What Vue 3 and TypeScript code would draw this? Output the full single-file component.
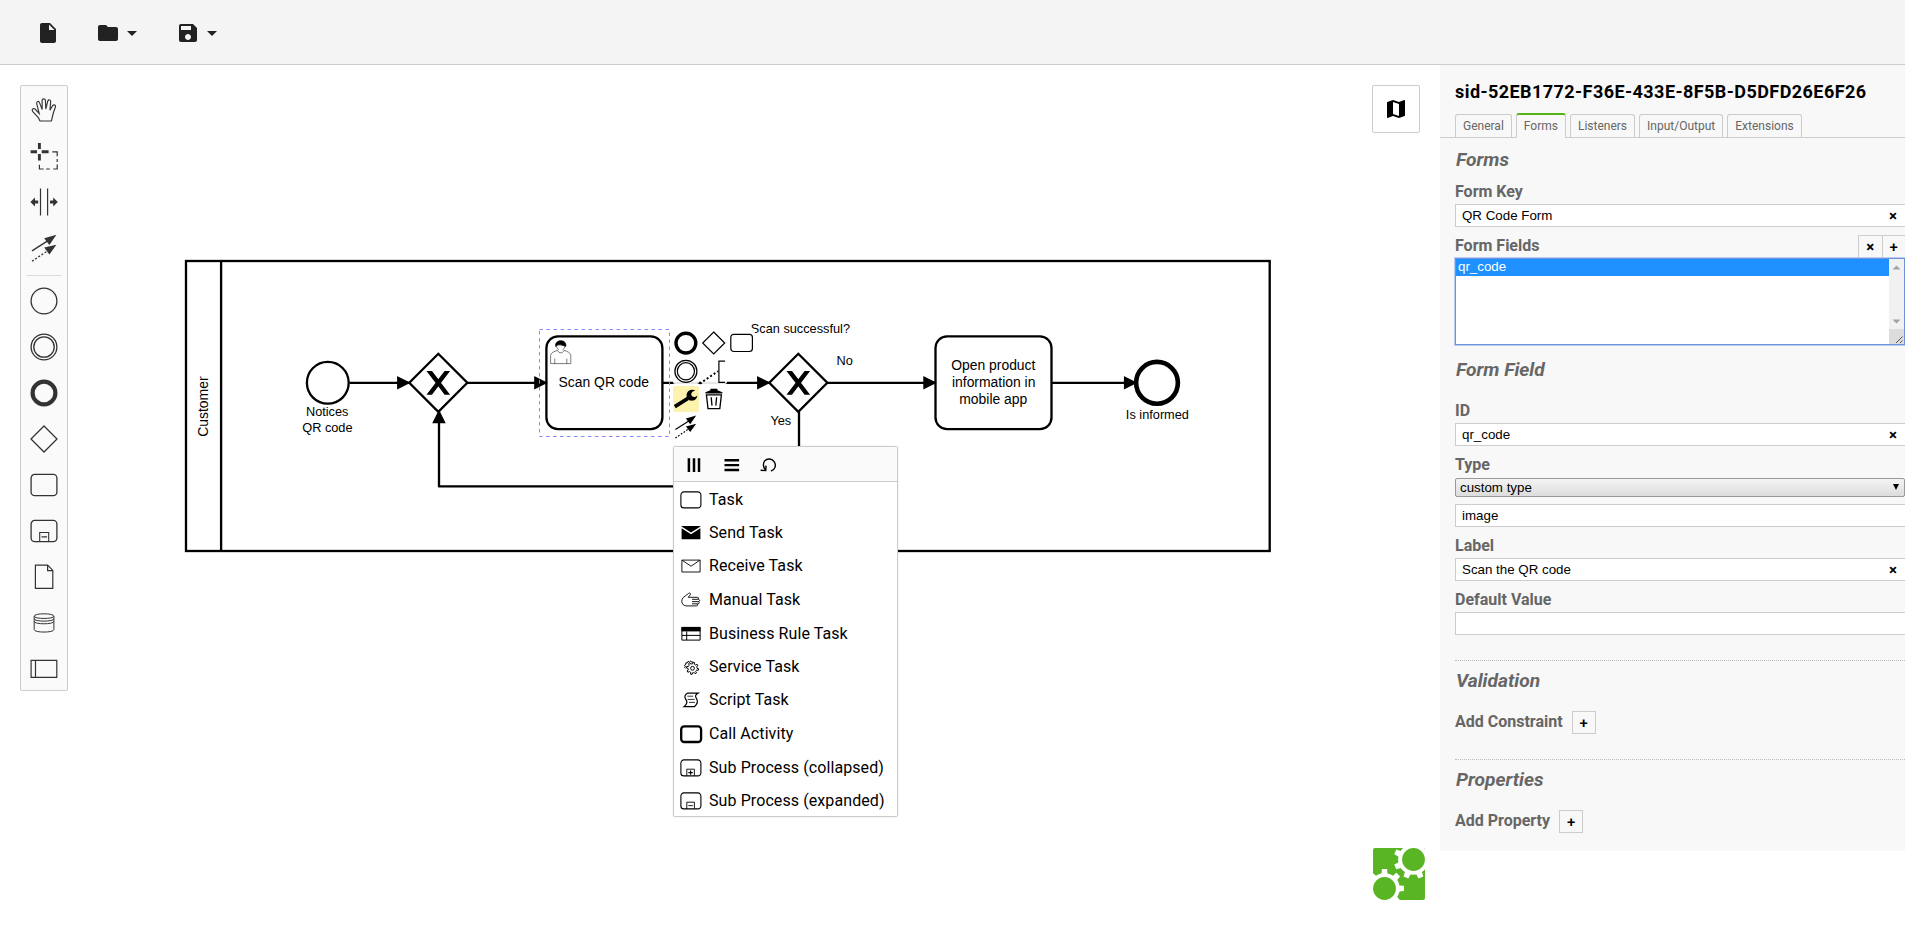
<script setup lang="ts">
interface Shape {
  d: string
  w?: number
  solid?: boolean
  dash?: string
}

interface MenuItem {
  label: string
  icon: string
}

const ring = (cx: number, cy: number, r: number): string =>
  `M${cx - r} ${cy}a${r} ${r} 0 1 0 ${2 * r} 0a${r} ${r} 0 1 0 ${-2 * r} 0z`

const box = (x: number, y: number, w: number, h: number, r: number): string =>
  `M${x + r} ${y}h${w - 2 * r}a${r} ${r} 0 0 1 ${r} ${r}v${h - 2 * r}a${r} ${r} 0 0 1 ${-r} ${r}h${2 * r - w}a${r} ${r} 0 0 1 ${-r} ${-r}v${2 * r - h}a${r} ${r} 0 0 1 ${r} ${-r}z`

const gear = (cx: number, cy: number, inner: number, outer: number, teeth: number, offset: number): string => {
  const points: string[] = []
  const step = (Math.PI * 2) / teeth
  for (let i = 0; i < teeth; i++) {
    const a = offset + i * step
    const spots: [number, number][] = [
      [inner, -0.25 * step],
      [outer, -0.17 * step],
      [outer, 0.17 * step],
      [inner, 0.25 * step],
      [inner, 0.5 * step],
    ]
    for (const [r, da] of spots) {
      points.push(`${(cx + r * Math.cos(a + da)).toFixed(2)} ${(cy + r * Math.sin(a + da)).toFixed(2)}`)
    }
  }
  return `M${points.join('L')}z`
}

/* Palette icons, 30 x 30 */
const paletteIcons: Record<string, Shape[]> = {
  hand: [
    {
      d: 'M11 26L9.3 22.6L3.6 16.4C2.4 14.6 4.2 12.6 6 14L10.2 18.4L7.7 8.6C7.4 6.3 9.8 5.7 10.5 7.6L13.2 14.6L13.1 5.2C13.2 3.4 16.1 3.4 16.4 5.2L16.8 14L18.8 6C19.5 4.2 21.9 4.9 21.7 6.7L20.9 15.2L23.6 10.6C24.9 9.1 27.1 10.2 26.4 12L24.3 18L22.4 26z',
      w: 1.15,
    },
  ],
  lasso: [
    { d: 'M1.6 10.8H8M12.7 10.8H19.6M10.4 2V8.1M10.4 13V19.6', w: 2.9 },
    { d: 'M23.3 10.8H28.2V15.2M28.2 18V21M28.2 23.6V28H24.3M20.8 28H17.2M14.6 28H10.4V23.8', w: 1.2 },
  ],
  space: [
    { d: 'M11.5 1.6V28.6M18.6 1.6V28.6', w: 1.2 },
    { d: 'M1.4 15L6 10.6V13.5H9.2V16.5H6V19.4zM28.8 15L24.2 10.6V13.5H21V16.5H24.2V19.4z', solid: true },
  ],
  connect: [
    { d: 'M3 17.9L19 7.6', w: 1.3 },
    { d: 'M3 28.2L19 17.6', w: 1.3, dash: '2 1.8' },
    { d: 'M27.4 1.8L15.2 5.2L20.4 11.9zM27.4 11.8L15.2 14.6L20.4 21.4z', solid: true },
  ],
  start: [{ d: ring(15, 15, 12.9), w: 1.3 }],
  intermediate: [
    { d: ring(15, 15, 12.9), w: 1.3 },
    { d: ring(15, 15, 10.2), w: 1.3 },
  ],
  end: [{ d: ring(15, 15, 11.4), w: 4.2 }],
  gateway: [{ d: 'M15 2L28 15L15 28L2 15z', w: 1.3 }],
  task: [{ d: box(2.1, 4.4, 25.8, 21.2, 3.6), w: 1.3 }],
  subprocess: [
    { d: box(2.1, 4.4, 25.8, 21.2, 3.6), w: 1.3 },
    { d: 'M10.7 25.3V16.5H19.7V25.3M12.5 20.9H18', w: 1.1 },
  ],
  dataObject: [{ d: 'M6.4 3.2H18.6L23.8 8.4V26.4H6.4zM18.6 3.2V8.6H23.8', w: 1.2 }],
  dataStore: [
    {
      d: 'M5.2 8.2C5.2 5 24.9 5 24.9 8.2V21.6C24.9 24.9 5.2 24.9 5.2 21.6zM5.2 8.2C5.2 11.2 24.9 11.2 24.9 8.2M5.2 10.8C5.2 13.9 24.9 13.9 24.9 10.8M5.2 13.4C5.2 16.6 24.9 16.6 24.9 13.4',
      w: 1,
    },
  ],
  participant: [{ d: 'M2.1 6.3H27.8V23.3H2.1zM6.5 6.3V23.3', w: 1.2 }],
}

/* Morph menu icons, 24 x 24 */
const menuIcons: Record<string, Shape[]> = {
  task: [{ d: box(1.9, 3.9, 20, 16, 3), w: 1.1 }],
  send: [{ d: 'M2.6 5.6L12 11.6L21.4 5.6V4.9H2.6zM2.6 7.3L12 13.3L21.4 7.3V18.2H2.6z', solid: true }],
  receive: [{ d: 'M2.9 6.1H21.1V18H2.9zM2.9 6.1L12 12.2L21.1 6.1', w: 0.9 }],
  manual: [
    {
      d: 'M7 17.9C4.2 17.4 2.7 15.6 2.8 13.1C2.9 10.2 4.4 9.2 6.6 7.8L9.6 5.4C10.9 4.4 12.3 5.8 11.2 6.9L9.2 9.3H18.4C20 9.3 20 11.3 18.4 11.3H13M18.6 11.3C21.5 11.3 21.5 13.6 18.6 13.6H13M18.8 13.6C20.9 13.8 20.7 15.8 18.6 15.8H13M17.8 15.8C19.3 16.1 19 17.9 17.4 17.9H7',
      w: 0.9,
    },
  ],
  rule: [
    { d: 'M2.5 5H21.5V9.4H2.5z', solid: true },
    { d: 'M2.9 5.4H21.1V18.1H2.9zM2.9 13.4H21.1M7.7 9.4V18.1', w: 1 },
  ],
  service: [
    { d: gear(13.5, 13.3, 4.5, 6.1, 8, 0.2), w: 1 },
    { d: ring(13.5, 13.3, 1.9), w: 1 },
    { d: 'M6.6 13.2L5.5 12.4L6.3 11.3L5.5 10.2L6.8 9.3L6.8 7.9L8.4 7.8L9 6.4L10.4 7L11.6 5.9L12.4 7L13.9 6.9', w: 1 },
  ],
  script: [
    {
      d: 'M8.5 5.2H19C16.4 6.7 15.8 8.2 17.4 10.4C19 12.8 18.9 15.6 15.4 18.7H5C8.8 15.7 8.6 13.6 6.7 11.1C5.1 8.8 5.8 6.7 8.5 5.2z',
      w: 1.2,
    },
    { d: 'M8.3 8.2H14.2M8.6 11.4H15.6M10 14.4H16', w: 0.8 },
  ],
  call: [{ d: box(2.2, 4.4, 19.9, 15.6, 3), w: 2.3 }],
  collapsed: [
    { d: box(1.9, 3.9, 20, 16, 3), w: 1.1 },
    { d: 'M7.8 19.8V13.2H15.4V19.8', w: 0.9 },
    { d: 'M9.4 16.6H13.8M11.6 14.4V18.8', w: 1.2 },
  ],
  expanded: [
    { d: box(1.9, 3.9, 20, 16, 3), w: 1.1 },
    { d: 'M7.8 19.8V13.2H15.4V19.8M9.4 16.6H13.8', w: 0.9 },
  ],
}

const toolGroup = ['hand', 'lasso', 'space', 'connect']
const elementGroup = ['start', 'intermediate', 'end', 'gateway', 'task', 'subprocess', 'dataObject', 'dataStore', 'participant']

const menuItems: MenuItem[] = [
  { label: 'Task', icon: 'task' },
  { label: 'Send Task', icon: 'send' },
  { label: 'Receive Task', icon: 'receive' },
  { label: 'Manual Task', icon: 'manual' },
  { label: 'Business Rule Task', icon: 'rule' },
  { label: 'Service Task', icon: 'service' },
  { label: 'Script Task', icon: 'script' },
  { label: 'Call Activity', icon: 'call' },
  { label: 'Sub Process (collapsed)', icon: 'collapsed' },
  { label: 'Sub Process (expanded)', icon: 'expanded' },
]

const tabs = ['General', 'Forms', 'Listeners', 'Input/Output', 'Extensions']
const activeTab = 'Forms'

const gatewayMarker =
  'm-9.14-9.71 7.43 9.71-7.43 9.71 3.43 0 5.71-7.46 5.71 7.46 3.43 0-7.43-9.71 7.43-9.71-3.43 0-5.71 7.46-5.71-7.46z'

const logoGears = [gear(40.4, 11.4, 15.3, 19.8, 8, Math.PI / 8), gear(11.5, 40.4, 15.3, 19.6, 8, 0)]
</script>

<template>
  <div class="app">
    <header class="toolbar">
      <svg class="tool file" viewBox="0 0 24 24"><path d="M6 2c-1.1 0-1.99.9-1.99 2L4 20c0 1.1.89 2 1.99 2H18c1.1 0 2-.9 2-2V8l-6-6H6zm7 7V3.5L18.5 9H13z" /></svg>
      <div class="tool-pair">
        <svg class="tool" viewBox="0 0 24 24"><path d="M10 4H4c-1.1 0-1.99.9-1.99 2L2 18c0 1.1.9 2 2 2h16c1.1 0 2-.9 2-2V8c0-1.1-.9-2-2-2h-8l-2-2z" /></svg>
        <svg class="tool" viewBox="0 0 24 24"><path d="M7 10l5 5 5-5z" /></svg>
      </div>
      <div class="tool-pair">
        <svg class="tool" viewBox="0 0 24 24"><path d="M17 3H5c-1.11 0-2 .9-2 2v14c0 1.1.89 2 2 2h14c1.1 0 2-.9 2-2V7l-4-4zm-5 16c-1.66 0-3-1.34-3-3s1.34-3 3-3 3 1.34 3 3-1.34 3-3 3zm3-10H5V5h10v4z" /></svg>
        <svg class="tool" viewBox="0 0 24 24"><path d="M7 10l5 5 5-5z" /></svg>
      </div>
    </header>

    <div class="workspace">
      <main class="canvas">
        <svg class="diagram" viewBox="0 65 1440 884">
          <defs>
            <marker id="arrow" viewBox="0 0 20 20" refX="11" refY="10" markerWidth="10" markerHeight="10" orient="auto">
              <path d="M1 5L11 10L1 15z" fill="#000" stroke="#000" stroke-width="1" />
            </marker>
          </defs>

          <g class="line">
            <rect x="186" y="261" width="1083.7" height="290" />
            <path d="M221.1 261V551" />
            <circle cx="327.8" cy="382.8" r="20.9" />
            <path d="M438.3 353.8L467.3 382.8L438.3 411.8L409.3 382.8z" />
            <rect x="546.4" y="336.4" width="116" height="92.8" rx="11.6" />
            <path d="M798.3 353.8L827.3 382.8L798.3 411.8L769.3 382.8z" />
            <rect x="935.5" y="336.4" width="116" height="92.8" rx="11.6" />
            <circle class="thick" cx="1157" cy="382.8" r="20.9" />
          </g>

          <g class="line">
            <path class="flow" d="M349.5 382.8H409.3" />
            <path class="flow" d="M467.3 382.8H546.4" />
            <path class="flow" d="M662.4 382.8H769.3" />
            <path class="flow" d="M827.3 382.8H935.5" />
            <path class="flow" d="M1051.5 382.8H1136.1" />
            <path class="flow" d="M799 411.8V486.4H439V411" />
          </g>

          <path class="mark" :d="gatewayMarker" transform="translate(438.3 382.8) scale(1.16)" />
          <path class="mark" :d="gatewayMarker" transform="translate(798.3 382.8) scale(1.16)" />

          <g class="user">
            <path d="M550.6 363.6V355.4C551.2 352.6 554 351.4 557.6 350.4C558.8 353.6 563 353.6 564 350.4C567.6 351.4 570.2 352.6 570.8 355.4V363.6z" />
            <path d="M554.8 363.6V358.6M566.8 363.6V358.6" />
            <path d="M557.6 350.4L558.4 349.4C555.2 346.4 555.6 341.4 560.7 341.2C565.8 341.4 566.2 346.4 563.2 349.4L564 350.4" />
            <path class="hair" d="M555.7 346.4C555.2 342.6 557.6 340.8 560.7 340.8C564 340.8 566.4 342.8 565.8 346.4C564.4 345.6 563.6 345.9 562.2 345.3C560 344.6 557.6 344.6 555.7 346.4z" />
          </g>

          <rect class="selection" x="539.5" y="329.5" width="130" height="107" />

          <g class="task-label">
            <text transform="translate(208.3 406.6) rotate(-90)">Customer</text>
            <text x="603.8" y="387">Scan QR code</text>
            <text x="993.3" y="370">Open product</text>
            <text x="993.7" y="387">information in</text>
            <text x="993.3" y="404">mobile app</text>
          </g>
          <g class="outer-label">
            <text x="327.2" y="416">Notices</text>
            <text x="327.4" y="432">QR code</text>
            <text x="800.4" y="333">Scan successful?</text>
            <text x="844.7" y="365">No</text>
            <text x="780.8" y="425">Yes</text>
            <text x="1157.4" y="419.4">Is informed</text>
          </g>
        </svg>

        <div class="palette">
          <svg v-for="name in toolGroup" :key="name" class="entry" viewBox="-8 -8 46 46">
            <path v-for="(s, i) in paletteIcons[name]" :key="i" :d="s.d" :class="s.solid ? 'solid' : 'outline'" :stroke-width="s.w" :stroke-dasharray="s.dash" />
          </svg>
          <hr class="separator" />
          <svg v-for="name in elementGroup" :key="name" class="entry" viewBox="-8 -8 46 46">
            <path v-for="(s, i) in paletteIcons[name]" :key="i" :d="s.d" :class="s.solid ? 'solid' : 'outline'" :stroke-width="s.w" :stroke-dasharray="s.dash" />
          </svg>
        </div>

        <div class="context-pad">
          <svg viewBox="0 0 25.5 26"><circle class="outline" cx="12.9" cy="13.1" r="9.9" stroke-width="3.4" /></svg>
          <svg viewBox="0 0 25.5 26"><path class="outline" d="M12.7 2L23.7 13L12.7 24L1.7 13z" stroke-width="1.2" /></svg>
          <svg viewBox="0 0 25.5 26"><path class="outline" :d="box(1.8, 4.3, 21.6, 17.2, 3)" stroke-width="1.2" /></svg>
          <svg viewBox="0 0 25.5 26">
            <circle class="outline" cx="12.9" cy="13.3" r="11" stroke-width="1.2" />
            <circle class="outline" cx="12.9" cy="13.3" r="8.6" stroke-width="1.2" />
          </svg>
          <svg viewBox="0 0 25.5 26">
            <path class="outline" d="M24 3.2H17.9V24.3H24" stroke-width="1.2" />
            <path class="outline" d="M-1.2 25.6L17 13.2" stroke-width="1.9" stroke-dasharray="2 2.2" />
          </svg>
          <span></span>
          <svg class="active" viewBox="0 0 25.5 26">
            <path class="outline" d="M1.8 20.6L15 12.4" stroke-width="3.6" />
            <path class="solid" d="M22.4 4.6C18.6 2.6 14 4.8 13.6 8.8C13.2 12.6 16.2 15 19.2 14.6C22.2 14.4 24.2 12 24.3 9.4C23 11 20.8 11.4 19.2 10.2C17.4 8.8 18.2 5.4 22.4 4.6z" />
          </svg>
          <svg viewBox="0 0 25.5 26">
            <path class="outline" d="M5.4 8.8L7 22.6H18.8L20.4 8.8zM10.2 11.2L11 19.6M15.6 11.2L14.8 19.6" stroke-width="1.3" />
            <path class="solid" d="M4.4 6.2L9.4 4.2V2.8H16.4V4.2L21.4 6.2V7.4H4.4z" />
          </svg>
          <span></span>
          <svg viewBox="0 0 25.5 26">
            <path class="outline" d="M2.4 15.6L17 6.2" stroke-width="1.2" />
            <path class="outline" d="M2.4 24L17 14" stroke-width="1.2" stroke-dasharray="1.7 1.6" />
            <path class="solid" d="M23.2 1.6L12.9 4.6L17.2 10.2zM23.2 9.8L12.9 12.4L17.2 18z" />
          </svg>
        </div>

        <div class="morph-menu">
          <div class="menu-head">
            <svg viewBox="0 0 16 16"><path class="outline" d="M2.9 1.2V14.9M8 1.2V14.9M13 1.2V14.9" stroke-width="2.5" /></svg>
            <svg viewBox="0 0 16 16"><path class="outline" d="M.5 3.2H15.1M.5 8.1H15.1M.5 13H15.1" stroke-width="2.4" /></svg>
            <svg viewBox="0 0 16 16"><path class="outline" d="M9.9 14.2C14.1 12.9 15.5 8.4 13.3 4.9C11.1 1.5 6.3 1 3.7 3.9C1.8 6.4 2 10.4 4.5 12.9M-.4 13.3L4.8 13.5L5 8.6" stroke-width="1.4" /></svg>
          </div>
          <div v-for="item in menuItems" :key="item.label" class="menu-row">
            <svg viewBox="0 0 24 24">
              <path v-for="(s, i) in menuIcons[item.icon]" :key="i" :d="s.d" :class="s.solid ? 'solid' : 'outline'" :stroke-width="s.w" />
            </svg>
            <span>{{ item.label }}</span>
          </div>
        </div>

        <div class="minimap-toggle">
          <svg viewBox="0 0 24 24"><path d="M20.5 3l-.16.03L15 5.1 9 3 3.36 4.9c-.21.07-.36.25-.36.48V20.5c0 .28.22.5.5.5l.16-.03L9 18.9l6 2.1 5.64-1.9c.21-.07.36-.25.36-.48V3.5c0-.28-.22-.5-.5-.5zM15 19l-6-2.11V5l6 2.11V19z" /></svg>
        </div>

        <svg class="logo" viewBox="0 0 52 52">
          <rect width="52" height="52" rx="2" fill="#59b524" />
          <path v-for="(d, i) in logoGears" :key="i" :d="d" fill="#fff" />
          <circle cx="40.5" cy="11.5" r="11.4" fill="#59b524" />
          <circle cx="11.5" cy="40.5" r="11.4" fill="#59b524" />
        </svg>
      </main>

      <aside class="panel">
        <h1>sid-52EB1772-F36E-433E-8F5B-D5DFD26E6F26</h1>
        <nav class="tabs">
          <span v-for="tab in tabs" :key="tab" class="tab" :class="{ current: tab === activeTab }">{{ tab }}</span>
        </nav>
        <div class="content">
          <section class="forms">
            <h2>Forms</h2>
            <label>Form Key</label>
            <div class="input"><span>QR Code Form</span><b>×</b></div>
            <div class="list-head">
              <label>Form Fields</label>
              <div class="list-buttons"><b>×</b><b class="plus">+</b></div>
            </div>
            <div class="listbox">
              <div class="options"><div class="option">qr_code</div></div>
              <div class="scrollbar">
                <svg viewBox="0 0 15 85">
                  <path d="M3.5 10.5L7.5 6.5L11.5 10.5zM3.5 60.5L7.5 64.5L11.5 60.5z" fill="#a3a3a3" />
                  <rect y="70" width="15" height="15" fill="#dcdcdc" />
                  <path d="M7 84L13.5 77.5M11 84L13.5 81.5" stroke="#555" stroke-width="1" />
                </svg>
              </div>
            </div>
          </section>

          <section class="form-field">
            <h2>Form Field</h2>
            <label class="first">ID</label>
            <div class="input"><span>qr_code</span><b>×</b></div>
            <label>Type</label>
            <div class="dropdown"><span>custom type</span><i></i></div>
            <div class="input custom"><span>image</span></div>
            <label>Label</label>
            <div class="input"><span>Scan the QR code</span><b>×</b></div>
            <label>Default Value</label>
            <div class="input"></div>
          </section>

          <section class="group">
            <h2>Validation</h2>
            <div class="add-row"><label>Add Constraint</label><b class="add plus">+</b></div>
          </section>
          <section class="group">
            <h2>Properties</h2>
            <div class="add-row"><label>Add Property</label><b class="add plus">+</b></div>
          </section>
        </div>
      </aside>
    </div>
  </div>
</template>

<style>
body {
  margin: 0;
  background: #fff;
  overflow: hidden;
}
</style>

<style scoped>
* {
  box-sizing: border-box;
}
.app {
  width: 1905px;
  height: 949px;
  display: flex;
  flex-direction: column;
  overflow: hidden;
  font-family: Roboto, sans-serif;
}
svg {
  display: block;
  flex: none;
}
.toolbar {
  height: 65px;
  flex: none;
  display: flex;
  align-items: flex-start;
  gap: 32px;
  padding: 21px 0 0 36px;
  background: #f4f4f4;
  border-bottom: 1px solid #ccc;
}
.tool {
  width: 24px;
  height: 24px;
  fill: #222;
}
.file {
  margin-right: 4px;
}
.tool-pair {
  display: flex;
}
.workspace {
  flex: 1;
  display: flex;
  min-height: 0;
}
.canvas {
  position: relative;
  width: 1440px;
  flex: none;
}
.diagram {
  width: 1440px;
  height: 884px;
}
.line {
  fill: none;
  stroke: #000;
  stroke-width: 2.32;
}
.thick {
  stroke-width: 4.64;
}
.flow {
  marker-end: url(#arrow);
  stroke-linejoin: round;
}
.mark {
  stroke: #000;
  stroke-width: 1;
}
.user path {
  fill: #fff;
  stroke: #444;
  stroke-width: 0.7;
}
.user .hair {
  fill: #000;
  stroke: #000;
}
.selection {
  fill: none;
  stroke: #88f;
  stroke-width: 1;
  stroke-dasharray: 3.5 3.5;
}
.task-label,
.outer-label {
  font-family: 'Liberation Sans', Arial, sans-serif;
  font-size: 13.92px;
  text-anchor: middle;
}
.outer-label {
  font-size: 12.76px;
}
.outline {
  fill: none;
  stroke: currentColor;
}
.solid {
  fill: currentColor;
}

.palette {
  position: absolute;
  left: 20px;
  top: 20px;
  width: 48px;
  height: 606px;
  padding-top: 1px;
  background: #fafafa;
  border: 1px solid #ccc;
  border-radius: 2px;
  color: #333;
}
.entry {
  width: 46px;
  height: 46px;
}
.separator {
  height: 1px;
  margin: 4px 5px 1.5px;
  border: 0;
  background: #ddd;
}

.context-pad {
  position: absolute;
  left: 673px;
  top: 265px;
  display: grid;
  grid-template-columns: repeat(3, 25.5px);
  grid-auto-rows: 26px;
  gap: 2px 2.5px;
  color: #000;
}
.context-pad svg {
  width: 25.5px;
  height: 26px;
  overflow: visible;
  background: rgba(255, 255, 255, 0.9);
  border-radius: 2px;
}
.context-pad .active {
  background: #fef3ae;
}

.morph-menu {
  position: absolute;
  left: 673px;
  top: 381px;
  width: 225px;
  height: 371px;
  background: #fff;
  border: 1px solid #ccc;
  border-radius: 2px;
  box-shadow: 0 0 2px rgba(0, 0, 0, 0.12);
  color: #000;
}
.menu-head {
  height: 35px;
  display: flex;
  align-items: center;
  gap: 21.5px;
  margin-bottom: 1px;
  padding: 1px 0 0 12px;
  background: #fafafa;
  border-bottom: 1px solid #ccc;
}
.menu-head svg {
  width: 16px;
  height: 16px;
  overflow: visible;
}
.menu-row {
  height: 33px;
  display: flex;
  align-items: center;
  gap: 6px;
  padding-left: 5px;
  font-size: 16px;
  line-height: 20px;
  letter-spacing: 0.09px;
}
.menu-row:nth-child(4),
.menu-row:nth-child(5),
.menu-row:nth-child(8),
.menu-row:nth-child(9),
.menu-row:nth-child(10) {
  height: 34px;
}
.menu-row:nth-child(11) {
  height: 32px;
}
.menu-row svg {
  width: 24px;
  height: 24px;
}

.minimap-toggle {
  position: absolute;
  left: 1372px;
  top: 20px;
  width: 48px;
  height: 48px;
  display: grid;
  place-items: center;
  background: #fff;
  border: 1px solid #ccc;
  border-radius: 2px;
}
.minimap-toggle svg {
  width: 24px;
  height: 24px;
}
.logo {
  position: absolute;
  left: 1373px;
  top: 783px;
  width: 52px;
  height: 52px;
}

.panel {
  width: 465px;
  height: 786px;
  flex: none;
  background: #f8f8f8;
  overflow: hidden;
}
h1,
h2,
label {
  display: block;
  margin: 0;
  white-space: nowrap;
  font-weight: 700;
  color: #666;
}
h1 {
  padding: 16px 0 0 15px;
  font-size: 18px;
  line-height: 22px;
  letter-spacing: 0.44px;
  color: #000;
}
.tabs {
  display: flex;
  align-items: flex-end;
  gap: 4px;
  height: 25px;
  margin-top: 10px;
  padding-left: 15px;
  border-bottom: 1px solid #ccc;
}
.tab {
  height: 23px;
  padding: 0 7px;
  border: 1px solid #ccc;
  border-bottom: 0;
  border-radius: 3px 3px 0 0;
  font-size: 12px;
  line-height: 22px;
  color: #666;
}
.current {
  height: 25px;
  margin-bottom: -1px;
  border-top: 2px solid #52b415;
  background: #f8f8f8;
}
.content {
  padding-left: 15px;
}
.forms {
  padding-top: 11px;
}
h2 {
  padding-left: 1px;
  font-size: 19.2px;
  line-height: 22px;
  font-style: italic;
}
label {
  margin-top: 9px;
  font-size: 16px;
  line-height: 19px;
}
h2 + label {
  margin-top: 11px;
}
.input {
  display: flex;
  justify-content: space-between;
  align-items: center;
  height: 23px;
  margin-top: 3px;
  padding: 0 8px 0 6px;
  background: #fff;
  border: 1px solid #ccc;
  border-right: 0;
  font-family: 'Liberation Sans', Arial, sans-serif;
  font-size: 13.33px;
  color: #000;
}
.input b,
.list-buttons b,
.add {
  font-family: Roboto, sans-serif;
  font-size: 15px;
  line-height: 20px;
}
.list-head {
  display: flex;
  justify-content: space-between;
  height: 31px;
}
.list-buttons {
  display: flex;
  padding-top: 8px;
}
.list-buttons b {
  width: 23.5px;
  height: 23px;
  border: 1px solid #ccc;
  border-width: 1px 0 0 1px;
  line-height: 22px;
  text-align: center;
}
.list-buttons .plus,
.add.plus {
  font-weight: 500;
  line-height: 22px;
}
.listbox {
  display: flex;
  height: 87px;
  border: 1px solid #6f92db;
  box-shadow: 0 0 0 1px rgba(110, 150, 230, 0.45);
  background: #fff;
}
.options {
  flex: 1;
  font-family: 'Liberation Sans', Arial, sans-serif;
  font-size: 13.33px;
}
.option {
  height: 17px;
  padding-left: 2px;
  line-height: 15px;
  background: #1e90ff;
  color: #fff;
}
.scrollbar {
  width: 15px;
  background: #f1f1f1;
}
.scrollbar svg {
  width: 15px;
  height: 85px;
}
.form-field {
  padding-top: 14px;
}
.form-field .first {
  margin-top: 20px;
}
.dropdown {
  display: flex;
  justify-content: space-between;
  height: 19px;
  margin: 4px 0 7px;
  padding: 0 5px 0 4px;
  border: 1px solid #999;
  border-radius: 2px;
  background: linear-gradient(#f4f4f4, #dcdcdc);
  font-family: 'Liberation Sans', Arial, sans-serif;
  font-size: 13.33px;
  line-height: 17px;
}
.dropdown i {
  width: 0;
  height: 0;
  margin-top: 5px;
  border: 3.5px solid transparent;
  border-top: 6px solid #000;
  border-bottom: 0;
}
.group {
  height: 99px;
  padding-top: 9px;
  border-top: 1px dotted #bbb;
}
.form-field + .group {
  margin-top: 25px;
}
.add-row {
  display: flex;
  gap: 9px;
  margin-top: 19px;
}
.add-row label {
  margin-top: 1px;
}
.add {
  width: 24px;
  height: 23px;
  border: 1px solid #ccc;
  text-align: center;
}
</style>
